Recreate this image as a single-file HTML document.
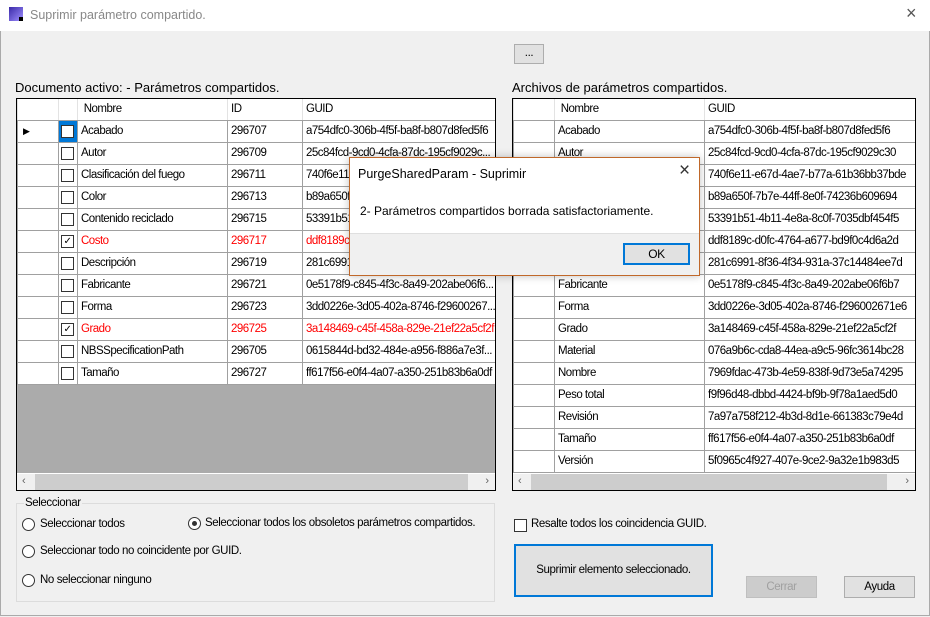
<!DOCTYPE html>
<html><head><meta charset="utf-8"><style>
*{box-sizing:border-box;margin:0;padding:0}
body{width:930px;height:617px;background:#f0f0f0;font-family:"Liberation Sans",sans-serif;font-size:12px;color:#000;position:relative;overflow:hidden}
.abs{position:absolute}
.win{position:absolute;left:0;top:0;width:930px;height:616px;border:1px solid #aaa;border-top:none}
.title{position:absolute;left:0;top:0;width:930px;height:31px;background:#fff}
.grid{position:absolute;background:#ababab;border:1px solid #000;overflow:hidden}
table{border-collapse:collapse;table-layout:fixed;background:#fff}
td{height:22px;border:1px solid #a0a0a0;padding:0 3px;white-space:nowrap;overflow:hidden;font-size:11.5px;letter-spacing:-0.5px}
tr.h td{height:21px;border-color:#e0e0e0;border-top:none;border-right:1px solid #e3e3e3;border-bottom:1px solid #a0a0a0}
td.rh{background:#fff;border-right:1px solid #a0a0a0}
.cb{display:inline-block;width:13px;height:13px;border:1px solid #333;background:#fff;vertical-align:middle;position:relative}
.red td{color:#f00}
.red td.rh{color:#000}
.hs{position:absolute;left:0;bottom:0;height:17px;background:#f0f0f0;font-size:11px;color:#606060}
.rad{display:inline-block;width:13px;height:13px;border:1px solid #333;border-radius:50%;background:#fff;position:absolute}
.lbl{position:absolute;font-size:11.5px;letter-spacing:-0.4px;white-space:nowrap}
.btn{position:absolute;border:1px solid #adadad;background:#e1e1e1;text-align:center;font-size:11.5px;letter-spacing:-0.4px}
</style></head><body>
<div class="win"></div>
<div class="title">
 <div class="abs" style="left:9px;top:7px;width:14px;height:14px;background:linear-gradient(135deg,#3a2aa8,#a090ff);"></div>
 <div class="abs" style="left:19px;top:17px;width:4px;height:4px;background:#000"></div>
 <div class="abs" style="left:30px;top:8px;font-size:12.5px;color:#888">Suprimir parámetro compartido.</div>
 <div class="abs" style="left:906px;top:3px;font-size:18px;color:#555">×</div>
</div>
<div class="btn" style="left:514px;top:44px;width:30px;height:20px;line-height:16px">...</div>
<div class="abs" style="left:15px;top:80px;font-size:13px">Documento activo: - Parámetros compartidos.</div>
<div class="abs" style="left:512px;top:80px;font-size:13px">Archivos de parámetros compartidos.</div>

<div class="grid" style="left:16px;top:98px;width:480px;height:393px">
<table style="width:478px">
<colgroup><col style="width:41px"><col style="width:19px"><col style="width:150px"><col style="width:75px"><col style="width:193px"></colgroup>
<tr class="h"><td></td><td></td><td>&nbsp;Nombre</td><td>ID</td><td>GUID</td></tr>
<tr><td class="rh" style="font-size:9px;padding-left:5px">▶</td><td style="background:#0078d7;padding:0 2px"><span class="cb"></span></td><td>Acabado</td><td>296707</td><td>a754dfc0-306b-4f5f-ba8f-b807d8fed5f6</td></tr>
<tr><td class="rh"></td><td style="padding:0 2px"><span class="cb"></span></td><td>Autor</td><td>296709</td><td>25c84fcd-9cd0-4cfa-87dc-195cf9029c...</td></tr>
<tr><td class="rh"></td><td style="padding:0 2px"><span class="cb"></span></td><td>Clasificación del fuego</td><td>296711</td><td>740f6e11-e67d-4ae7-b77a-61b36bb37bde</td></tr>
<tr><td class="rh"></td><td style="padding:0 2px"><span class="cb"></span></td><td>Color</td><td>296713</td><td>b89a650f-7b7e-44ff-8e0f-74236b609694</td></tr>
<tr><td class="rh"></td><td style="padding:0 2px"><span class="cb"></span></td><td>Contenido reciclado</td><td>296715</td><td>53391b51-4b11-4e8a-8c0f-7035dbf454f5</td></tr>
<tr class="red"><td class="rh"></td><td style="padding:0 2px"><span class="cb" style="font-size:10px;line-height:11px;text-align:center;color:#000">✓</span></td><td>Costo</td><td>296717</td><td>ddf8189c-d0fc-4764-a677-bd9f0c4d6a2d</td></tr>
<tr><td class="rh"></td><td style="padding:0 2px"><span class="cb"></span></td><td>Descripción</td><td>296719</td><td>281c6991-8f36-4f34-931a-37c14484ee7d</td></tr>
<tr><td class="rh"></td><td style="padding:0 2px"><span class="cb"></span></td><td>Fabricante</td><td>296721</td><td>0e5178f9-c845-4f3c-8a49-202abe06f6...</td></tr>
<tr><td class="rh"></td><td style="padding:0 2px"><span class="cb"></span></td><td>Forma</td><td>296723</td><td>3dd0226e-3d05-402a-8746-f29600267...</td></tr>
<tr class="red"><td class="rh"></td><td style="padding:0 2px"><span class="cb" style="font-size:10px;line-height:11px;text-align:center;color:#000">✓</span></td><td>Grado</td><td>296725</td><td>3a148469-c45f-458a-829e-21ef22a5cf2f</td></tr>
<tr><td class="rh"></td><td style="padding:0 2px"><span class="cb"></span></td><td>NBSSpecificationPath</td><td>296705</td><td>0615844d-bd32-484e-a956-f886a7e3f...</td></tr>
<tr><td class="rh"></td><td style="padding:0 2px"><span class="cb"></span></td><td>Tamaño</td><td>296727</td><td>ff617f56-e0f4-4a07-a350-251b83b6a0df</td></tr>
</table>
<div class="hs" style="width:478px;border-top:1px solid #fff"><span class="abs" style="left:5px;top:1px">‹</span><div class="abs" style="left:18px;top:0;width:433px;height:16px;background:#cdcdcd"></div><span class="abs" style="right:6px;top:1px">›</span></div>
</div>

<div class="grid" style="left:512px;top:98px;width:404px;height:393px">
<table style="width:402px">
<colgroup><col style="width:41px"><col style="width:150px"><col style="width:211px"></colgroup>
<tr class="h"><td></td><td>&nbsp;Nombre</td><td>GUID</td></tr>
<tr><td class="rh"></td><td>Acabado</td><td>a754dfc0-306b-4f5f-ba8f-b807d8fed5f6</td></tr>
<tr><td class="rh"></td><td>Autor</td><td>25c84fcd-9cd0-4cfa-87dc-195cf9029c30</td></tr>
<tr><td class="rh"></td><td>Clasificación del fuego</td><td>740f6e11-e67d-4ae7-b77a-61b36bb37bde</td></tr>
<tr><td class="rh"></td><td>Color</td><td>b89a650f-7b7e-44ff-8e0f-74236b609694</td></tr>
<tr><td class="rh"></td><td>Contenido reciclado</td><td>53391b51-4b11-4e8a-8c0f-7035dbf454f5</td></tr>
<tr><td class="rh"></td><td>Costo</td><td>ddf8189c-d0fc-4764-a677-bd9f0c4d6a2d</td></tr>
<tr><td class="rh"></td><td>Descripción</td><td>281c6991-8f36-4f34-931a-37c14484ee7d</td></tr>
<tr><td class="rh"></td><td>Fabricante</td><td>0e5178f9-c845-4f3c-8a49-202abe06f6b7</td></tr>
<tr><td class="rh"></td><td>Forma</td><td>3dd0226e-3d05-402a-8746-f296002671e6</td></tr>
<tr><td class="rh"></td><td>Grado</td><td>3a148469-c45f-458a-829e-21ef22a5cf2f</td></tr>
<tr><td class="rh"></td><td>Material</td><td>076a9b6c-cda8-44ea-a9c5-96fc3614bc28</td></tr>
<tr><td class="rh"></td><td>Nombre</td><td>7969fdac-473b-4e59-838f-9d73e5a74295</td></tr>
<tr><td class="rh"></td><td>Peso total</td><td>f9f96d48-dbbd-4424-bf9b-9f78a1aed5d0</td></tr>
<tr><td class="rh"></td><td>Revisión</td><td>7a97a758f212-4b3d-8d1e-661383c79e4d</td></tr>
<tr><td class="rh"></td><td>Tamaño</td><td>ff617f56-e0f4-4a07-a350-251b83b6a0df</td></tr>
<tr><td class="rh"></td><td>Versión</td><td>5f0965c4f927-407e-9ce2-9a32e1b983d5</td></tr>
</table>
<div class="hs" style="width:402px;border-top:1px solid #fff"><span class="abs" style="left:5px;top:1px">‹</span><div class="abs" style="left:18px;top:0;width:356px;height:16px;background:#cdcdcd"></div><span class="abs" style="right:6px;top:1px">›</span></div>
</div>

<div class="abs" style="left:16px;top:503px;width:479px;height:99px;border:1px solid #dcdcdc"></div>
<div class="lbl" style="left:24px;top:497px;background:#f0f0f0;padding:0 1px">Seleccionar</div>
<div class="rad" style="left:22px;top:518px"></div><div class="lbl" style="left:40px;top:518px">Seleccionar todos</div>
<div class="rad" style="left:188px;top:517px"><div class="abs" style="left:3px;top:3px;width:5px;height:5px;border-radius:50%;background:#333"></div></div><div class="lbl" style="left:205px;top:517px">Seleccionar todos los obsoletos parámetros compartidos.</div>
<div class="rad" style="left:22px;top:545px"></div><div class="lbl" style="left:40px;top:545px">Seleccionar todo no coincidente por GUID.</div>
<div class="rad" style="left:22px;top:574px"></div><div class="lbl" style="left:40px;top:574px">No seleccionar ninguno</div>

<div class="cb abs" style="left:514px;top:518px"></div><div class="lbl" style="left:531px;top:518px">Resalte todos los coincidencia GUID.</div>
<div class="btn" style="left:514px;top:544px;width:199px;height:53px;border:2px solid #0078d7;line-height:49px">Suprimir elemento seleccionado.</div>
<div class="btn" style="left:746px;top:576px;width:71px;height:22px;line-height:20px;color:#a0a0a0;background:#ccc;border-color:#bfbfbf">Cerrar</div>
<div class="btn" style="left:844px;top:576px;width:71px;height:22px;line-height:20px">Ayuda</div>

<div class="abs" style="left:349px;top:157px;width:351px;height:119px;border:1px solid #c0682a;background:#fff;box-shadow:0 0 8px rgba(0,0,0,.25)">
 <div class="abs" style="left:8px;top:9px;font-size:12.5px">PurgeSharedParam - Suprimir</div>
 <div class="abs" style="left:329px;top:2px;font-size:19px;color:#333">×</div>
 <div class="abs" style="left:10px;top:46px;font-size:12px">2- Parámetros compartidos borrada satisfactoriamente.</div>
 <div class="abs" style="left:0;top:75px;width:349px;height:42px;background:#f0f0f0;border-top:1px solid #dfdfdf"></div>
 <div class="btn" style="left:273px;top:85px;width:67px;height:22px;border:2px solid #0078d7;line-height:18px;font-size:12px">OK</div>
</div>
</body></html>
